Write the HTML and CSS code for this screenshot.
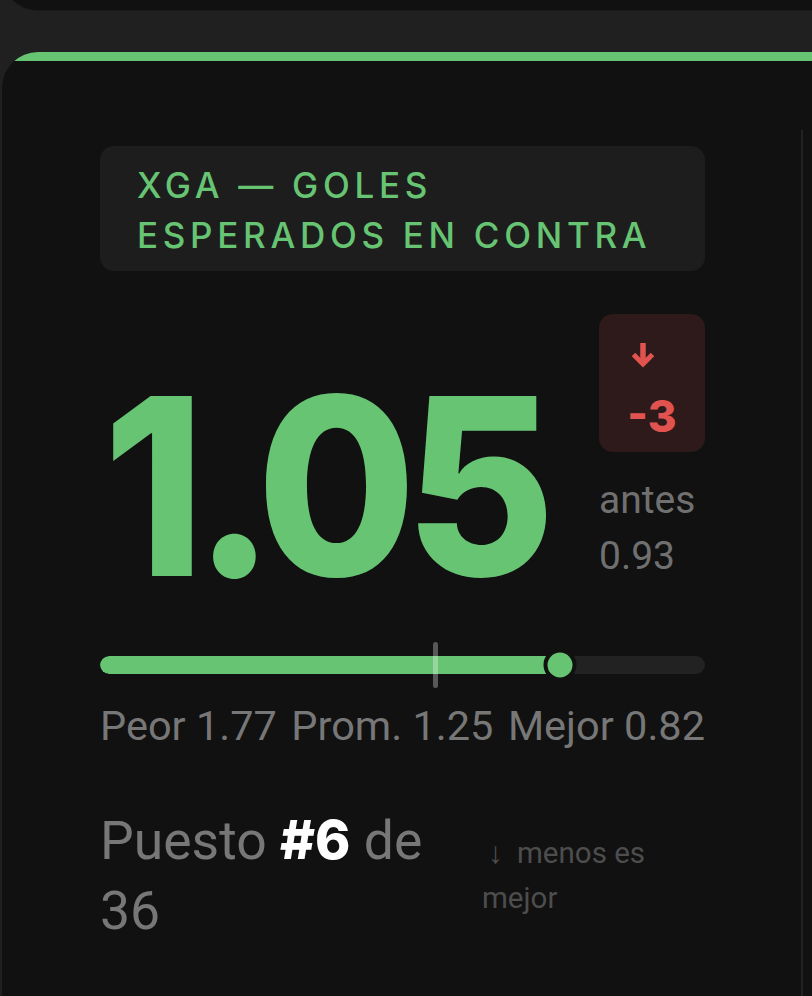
FILE: index.html
```html
<!DOCTYPE html>
<html lang="es">
<head>
<meta charset="utf-8">
<title>xGA</title>
<link rel="stylesheet" href="styles.css">
</head>
<body>
<div class="prev-card"></div>
<div class="card">
  <div class="accent"></div>
  <div class="body">
    <div class="main">
      <div class="label">XGA — GOLES ESPERADOS EN CONTRA</div>
      <div class="hero">
        <div class="value">1.05</div>
        <div class="delta">
          <div class="badge">
            <svg class="arrow" viewBox="0 0 26 26" aria-hidden="true">
              <path d="M13 1V22" fill="none" stroke="#e0534f" stroke-width="5.5"/>
              <path d="M3.5 12.5L13 22L22.5 12.5" fill="none" stroke="#e0534f" stroke-width="5"/>
            </svg>
            <span class="chg">-3</span>
          </div>
          <div class="before">antes 0.93</div>
        </div>
      </div>
      <div class="bar">
        <div class="track"><div class="fill" style="width:76%"></div></div>
        <span class="avg" style="left:55.5%"></span>
        <span class="knob" style="left:76%"></span>
      </div>
      <div class="scale"><span>Peor 1.77</span><span>Prom. 1.25</span><span>Mejor 0.82</span></div>
      <div class="rank">
        <div class="pos">Puesto <b>#6</b> de 36</div>
        <div class="hint"><span class="down">↓</span>menos es mejor</div>
      </div>
    </div>
    <div class="side"></div>
  </div>
</div>
</body>
</html>
```
FILE: styles.css
```css
* { box-sizing: border-box; }
html, body { margin: 0; height: 100%; }
body {
  background: #202020;
  overflow: hidden;
  font-family: Roboto, "Liberation Sans", sans-serif;
}
.prev-card {
  margin: -50px 0 0 2px;
  width: 900px;
  height: 61px;
  background: #111;
  border-bottom: 1px solid #1a1a1a;
  border-radius: 0 0 36px 36px;
}
.card {
  margin: 41px 0 0 2px;
  width: 900px;
  min-height: 1000px;
  background: #111;
  border-radius: 36px 36px 0 0;
  overflow: hidden;
}
.accent { height: 9px; background: #66c473; }
.body { display: flex; padding: 69px 0 0 98px; }
.main { width: 605px; padding-top: 16px; }
.side { margin-left: 96px; border-left: 2px solid #222; align-self: stretch; min-height: 900px; }

.label {
  background: #1d1d1d;
  border-radius: 14px;
  padding: 14px 37px 11px;
  font-family: Inter, sans-serif;
  font-weight: 500;
  font-size: 35px;
  line-height: 50px;
  letter-spacing: 4.7px;
  color: #66c473;
  text-transform: uppercase;
}

.hero {
  display: flex;
  justify-content: space-between;
  align-items: flex-start;
  margin-top: 43px;
}
.value {
  font-family: Inter, sans-serif;
  font-weight: 800;
  font-size: 248px;
  line-height: 248px;
  margin-top: 48px;
  margin-left: 3px;
  letter-spacing: -12px;
  font-variant-numeric: proportional-nums;
  color: #66c473;
  transform: scaleX(0.93);
  transform-origin: 0 0;
}
.delta { width: 106px; flex-shrink: 0; }
.badge {
  height: 138px;
  background: #2e1a1a;
  border-radius: 14px;
  display: flex;
  flex-direction: column;
  align-items: center;
  padding-top: 28px;
}
.arrow { width: 26px; height: 26px; margin-right: 18px; display: block; }
.chg {
  font-family: Inter, sans-serif;
  font-weight: 800;
  font-size: 44px;
  line-height: 44px;
  margin-top: 26px;
  color: #e0534f;
}
.before {
  margin-top: 20px;
  font-size: 39px;
  line-height: 56px;
  color: #707070;
}

.bar { position: relative; height: 46px; margin-top: 32px; padding-top: 14px; }
.track { height: 18px; border-radius: 9px; background: #222; overflow: hidden; }
.fill { height: 100%; background: #66c473; border-radius: 9px; }
.avg {
  position: absolute;
  top: 0;
  width: 5px;
  height: 46px;
  margin-left: -2.5px;
  border-radius: 3px;
  background: rgba(255, 255, 255, 0.3);
}
.knob {
  position: absolute;
  top: 23px;
  width: 33px;
  height: 33px;
  border-radius: 50%;
  background: #66c473;
  border: 4px solid #111;
  transform: translate(-50%, -50%);
}

.scale {
  display: flex;
  justify-content: space-between;
  margin-top: 15px;
  font-size: 41.5px;
  line-height: 46px;
  color: #777;
}

.rank { display: flex; align-items: flex-start; margin-top: 56px; }
.pos { width: 340px; font-size: 53.5px; line-height: 70px; color: #777; }
.pos b { color: #fff; font-family: Inter, sans-serif; font-weight: 800; }
.hint {
  margin-left: 42px;
  width: 180px;
  margin-top: 25px;
  font-size: 29.5px;
  line-height: 45px;
  color: #4d4d4d;
}
.down { font-size: 30px; margin: 0 14px 0 6px; }
```
